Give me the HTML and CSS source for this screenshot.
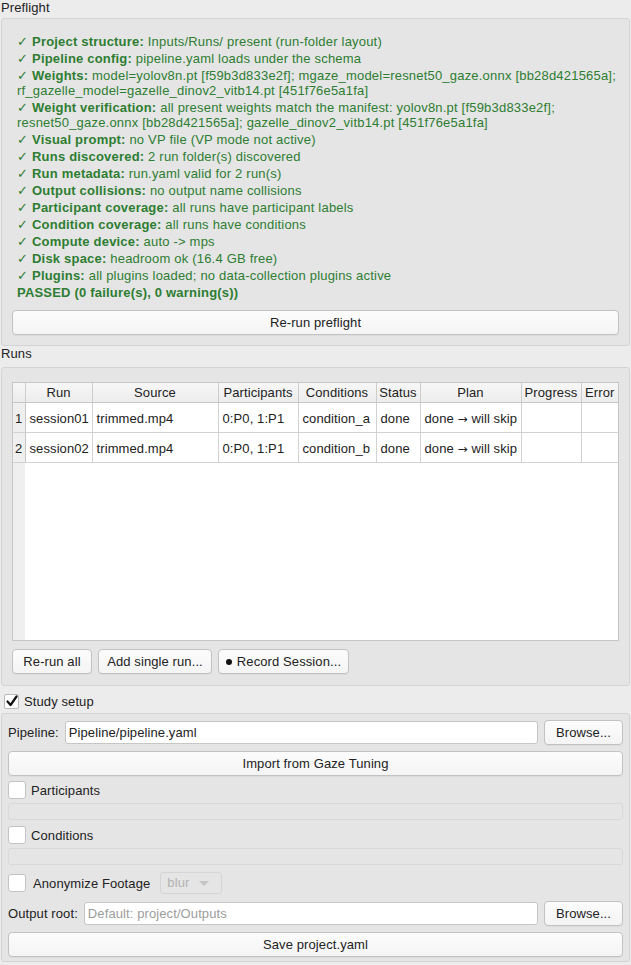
FILE: index.html
```html
<!DOCTYPE html>
<html lang="en">
<head>
    <meta charset="UTF-8">
    <meta name="viewport" content="width=device-width, initial-scale=1.0">
    <title>Project</title>

    <link rel="stylesheet" href="styles.css">
</head>
<body>
    <section class="group">
        <div class="group-title">Preflight</div>
        <div class="group-box preflight-box">
            <div class="checks">
                <div class="check">✓ <b>Project structure:</b> Inputs/Runs/ present (run-folder layout)</div>
                <div class="check">✓ <b>Pipeline config:</b> pipeline.yaml loads under the schema</div>
                <div class="check">✓ <b>Weights:</b> model=yolov8n.pt [f59b3d833e2f]; mgaze_model=resnet50_gaze.onnx [bb28d421565a];<br>rf_gazelle_model=gazelle_dinov2_vitb14.pt [451f76e5a1fa]</div>
                <div class="check">✓ <b>Weight verification:</b> all present weights match the manifest: yolov8n.pt [f59b3d833e2f];<br>resnet50_gaze.onnx [bb28d421565a]; gazelle_dinov2_vitb14.pt [451f76e5a1fa]</div>
                <div class="check">✓ <b>Visual prompt:</b> no VP file (VP mode not active)</div>
                <div class="check">✓ <b>Runs discovered:</b> 2 run folder(s) discovered</div>
                <div class="check">✓ <b>Run metadata:</b> run.yaml valid for 2 run(s)</div>
                <div class="check">✓ <b>Output collisions:</b> no output name collisions</div>
                <div class="check">✓ <b>Participant coverage:</b> all runs have participant labels</div>
                <div class="check">✓ <b>Condition coverage:</b> all runs have conditions</div>
                <div class="check">✓ <b>Compute device:</b> auto -&gt; mps</div>
                <div class="check">✓ <b>Disk space:</b> headroom ok (16.4 GB free)</div>
                <div class="check">✓ <b>Plugins:</b> all plugins loaded; no data-collection plugins active</div>
                <div class="check"><b>PASSED (0 failure(s), 0 warning(s))</b></div>
            </div>
            <button class="btn wide rerun-preflight">Re-run preflight</button>
        </div>
    </section>

    <section class="group">
        <div class="group-title">Runs</div>
        <div class="group-box runs-box">
            <div class="table-wrap">
                <table class="runs">
                    <colgroup>
                        <col style="width: 12px">
                        <col style="width: 67px">
                        <col style="width: 126px">
                        <col style="width: 80px">
                        <col style="width: 78px">
                        <col style="width: 44px">
                        <col style="width: 101px">
                        <col style="width: 60px">
                        <col style="width: 37px">
                    </colgroup>
                    <thead>
                        <tr>
                            <th class="corner"></th>
                            <th>Run</th>
                            <th>Source</th>
                            <th>Participants</th>
                            <th>Conditions</th>
                            <th>Status</th>
                            <th>Plan</th>
                            <th>Progress</th>
                            <th>Error</th>
                        </tr>
                    </thead>
                    <tbody>
                        <tr>
                            <td class="row-num">1</td>
                            <td>session01</td>
                            <td>trimmed.mp4</td>
                            <td>0:P0, 1:P1</td>
                            <td>condition_a</td>
                            <td>done</td>
                            <td>done <span class="arrow-glyph">→</span> will skip</td>
                            <td></td>
                            <td></td>
                        </tr>
                        <tr>
                            <td class="row-num">2</td>
                            <td>session02</td>
                            <td>trimmed.mp4</td>
                            <td>0:P0, 1:P1</td>
                            <td>condition_b</td>
                            <td>done</td>
                            <td>done <span class="arrow-glyph">→</span> will skip</td>
                            <td></td>
                            <td></td>
                        </tr>
                    </tbody>
                </table>
            </div>
            <div class="run-actions">
                <button class="btn rerun-all">Re-run all</button>
                <button class="btn add-run">Add single run...</button>
                <button class="btn record"><span class="dot"></span>Record Session...</button>
            </div>
        </div>
    </section>

    <label class="study-toggle">
        <span class="tick">
            <svg width="12" height="12" viewBox="0 0 12 12"><path d="M1.5 6.5 L4.6 10 L10.5 1.5" fill="none" stroke="#111" stroke-width="2.2" stroke-linecap="round" stroke-linejoin="round"/></svg>
        </span>
        Study setup
    </label>

    <div class="group-box study-box">
        <div class="field-row first">
            <span class="field-label">Pipeline:</span>
            <div class="text-input">Pipeline/pipeline.yaml</div>
            <button class="btn browse">Browse...</button>
        </div>
        <button class="btn wide import">Import from Gaze Tuning</button>

        <div class="check-row participants">
            <span class="box"></span>
            <span>Participants</span>
        </div>
        <div class="disabled-bar"></div>

        <div class="check-row conditions">
            <span class="box"></span>
            <span>Conditions</span>
        </div>
        <div class="disabled-bar"></div>

        <div class="check-row anonymize">
            <span class="box"></span>
            <span class="anon-label">Anonymize Footage</span>
            <div class="combo">blur <span class="arrow"></span></div>
        </div>

        <div class="field-row output">
            <span class="field-label">Output root:</span>
            <div class="text-input placeholder">Default: project/Outputs</div>
            <button class="btn browse">Browse...</button>
        </div>
        <button class="btn wide save">Save project.yaml</button>
    </div>
</body>
</html>
```

FILE: styles.css
```css
body {
    margin: 0;
    background-color: #ececec;
    color: #222;
    font-family: "Liberation Sans", Arial, sans-serif;
    font-size: 13px;
    letter-spacing: 0.1px;
    width: 631px;
}

/* group boxes */
.group-title {
    height: 17px;
    line-height: 16px;
    padding-left: 1px;
}

.group-box {
    margin: 1px 1px 0 1px;
    background-color: #e5e5e5;
    border: 1px solid #d4d4d4;
    border-radius: 3px;
}

.preflight-box {
    padding: 15px 10px 10px 10px;
}

.checks {
    padding-left: 5px;
    color: #2e7d32;
    margin-bottom: 10px;
    letter-spacing: 0.2px;
}

.check {
    line-height: 15px;
    margin-bottom: 2px;
    white-space: nowrap;
}

/* buttons */
.btn {
    font-family: inherit;
    font-size: 13px;
    letter-spacing: inherit;
    color: #222;
    height: 25px;
    padding: 0 12px;
    white-space: nowrap;
    background: linear-gradient(#fcfcfc, #f4f4f4);
    border: 1px solid #c2c2c2;
    border-radius: 4px;
    box-shadow: 0 1px 0 rgba(0, 0, 0, 0.04);
}

.btn.wide {
    display: block;
    width: 100%;
}

/* runs table */
.runs-box {
    margin-top: 4px;
    padding: 14px 10px 11px 10px;
}

.table-wrap {
    height: 257px;
    border: 1px solid #c6c6c6;
    background: linear-gradient(to right, #efefef 12px, #ffffff 12px);
}

.runs {
    border-collapse: collapse;
    table-layout: fixed;
    width: 605px;
}

.runs th {
    height: 19px;
    padding: 0;
    font-weight: normal;
    text-align: center;
    background: linear-gradient(#f7f7f7, #ececec);
    border-right: 1px solid #cdcdcd;
    border-bottom: 1px solid #c6c6c6;
}

.runs th:last-child {
    border-right: none;
}

.runs td {
    height: 27px;
    padding: 2px 0 0 4px;
    white-space: nowrap;
    overflow: hidden;
    background-color: #fff;
    border-right: 1px solid #d2d2d2;
    border-bottom: 1px solid #d2d2d2;
}

.runs td:last-child {
    border-right: none;
}

.runs td.row-num {
    padding: 2px 0 0 0;
    text-align: center;
    background-color: #efefef;
    border-right: 1px solid #c6c6c6;
}

.arrow-glyph {
    font-family: "DejaVu Sans", sans-serif;
    font-size: 12px;
}

.run-actions {
    display: flex;
    gap: 6px;
    margin-top: 8px;
}

.run-actions .btn {
    padding: 0;
}

.rerun-all {
    width: 80px;
}

.add-run {
    width: 114px;
}

.record {
    width: 131px;
    display: flex;
    align-items: center;
    justify-content: center;
}

.dot {
    width: 6px;
    height: 6px;
    border-radius: 50%;
    background-color: #111;
    margin-right: 5px;
}

/* study setup */
.study-toggle {
    display: flex;
    align-items: center;
    height: 14px;
    margin: 8px 0 0 4px;
}

.tick {
    width: 13px;
    height: 13px;
    margin-right: 5px;
    background-color: #fff;
    border: 1px solid #b9b9b9;
    border-radius: 2px;
    display: flex;
    align-items: center;
    justify-content: center;
}

.study-box {
    margin-top: 5px;
    padding: 6px 6px 3px 6px;
    height: 238px;
}

.field-row {
    display: flex;
    align-items: center;
    height: 25px;
}

.field-label {
    margin-right: 6px;
}

.text-input {
    flex: 1;
    height: 21px;
    line-height: 21px;
    padding: 0 3px;
    background-color: #fff;
    border: 1px solid #c6c6c6;
    border-radius: 3px;
}

.text-input.placeholder {
    color: #9c9c9c;
}

.browse {
    width: 79px;
    margin-left: 6px;
    padding: 0;
}

.import {
    margin-top: 6px;
}

.check-row {
    display: flex;
    align-items: center;
    height: 18px;
}

.box {
    width: 16px;
    height: 16px;
    margin-right: 5px;
    background-color: #fff;
    border: 1px solid #c4c4c4;
    border-radius: 3px;
}

.participants {
    margin-top: 5px;
}

.conditions {
    margin-top: 6px;
}

.disabled-bar {
    height: 15px;
    margin-top: 4px;
    background-color: #e5e5e5;
    border: 1px solid #d9d9d9;
    border-radius: 3px;
}

.anonymize {
    height: 22px;
    margin-top: 7px;
}

.anon-label {
    margin-left: 2px;
}

.combo {
    width: 48px;
    height: 20px;
    line-height: 20px;
    margin-left: 10px;
    padding: 0 6px;
    color: #b3b3b3;
    border: 1px solid #d5d5d5;
    border-radius: 3px;
    position: relative;
}

.arrow {
    position: absolute;
    right: 12px;
    top: 8px;
    border-left: 5px solid transparent;
    border-right: 5px solid transparent;
    border-top: 5px solid #c4c4c4;
}

.output {
    margin-top: 7px;
}

.save {
    margin-top: 6px;
}
```
